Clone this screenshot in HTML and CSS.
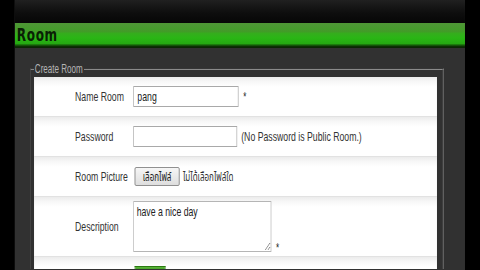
FILE: index.html
```html
<!DOCTYPE html>
<html lang="en">
<head>
    <meta charset="UTF-8">
    <title>Room - Create Room</title>
    <link rel="stylesheet" href="styles.css">
</head>
<body>
    <div class="viewport">
        <div class="screen">
            <div class="page">
                <div class="topbar"></div>

                <!-- Room panel -->
                <div class="panel">
                    <h2 class="panel-title">Room</h2>
                    <div class="panel-body">
                        <fieldset class="create-room">
                            <legend>Create Room</legend>
                            <form class="room-form">
                                <div class="form-row row-name">
                                    <label class="form-label">Name Room</label>
                                    <div class="form-field">
                                        <input type="text" class="text-input input-name" value="pang">
                                        <span class="required">*</span>
                                    </div>
                                </div>
                                <div class="form-row row-password">
                                    <label class="form-label">Password</label>
                                    <div class="form-field">
                                        <input type="password" class="text-input input-password">
                                        <span class="hint">(No Password is Public Room.)</span>
                                    </div>
                                </div>
                                <div class="form-row row-picture">
                                    <label class="form-label">Room Picture</label>
                                    <div class="form-field">
                                        <button type="button" class="file-btn">เลือกไฟล์</button>
                                        <span class="file-name">ไม่ได้เลือกไฟล์ใด</span>
                                    </div>
                                </div>
                                <div class="form-row row-description">
                                    <label class="form-label">Description</label>
                                    <div class="form-field field-bottom">
                                        <textarea class="text-area">have a nice day</textarea>
                                        <span class="required">*</span>
                                    </div>
                                </div>
                                <div class="form-row row-submit">
                                    <div class="form-label"></div>
                                    <div class="form-field field-top">
                                        <button type="submit" class="submit-btn" aria-label="Create"></button>
                                    </div>
                                </div>
                            </form>
                        </fieldset>
                    </div>
                </div>
            </div>
        </div>
    </div>
</body>
</html>
```

FILE: styles.css
```css
/* === Base === */
html, body {
    margin: 0;
    padding: 0;
    background: #000;
    overflow: hidden;
    height: 270px;
}

.viewport {
    width: 480px;
    height: 270px;
    overflow: hidden;
}

/* the capture is squeezed sideways, so the page is too */
.screen {
    width: 715px;
    height: 270px;
    overflow: hidden;
    transform: scaleX(0.67);
    transform-origin: 0 0;
    font-family: "Liberation Sans", Arial, "Noto Sans Thai", "Noto Sans", sans-serif;
    font-size: 13px;
    color: #333;
}

.page {
    margin: 0 21px 0 22px;
    height: 270px;
    overflow: hidden;
    background: #313131;
}

.topbar {
    height: 23px;
    background: linear-gradient(to bottom, #202020, #0e0e0e 55%, #060606);
}

/* === Green panel header === */
.panel-title {
    margin: 0;
    height: 25px;
    line-height: 24px;
    padding-left: 3px;
    font-family: "DejaVu Sans", Verdana, sans-serif;
    font-size: 18px;
    font-weight: bold;
    letter-spacing: 1px;
    color: #0a2005;
    background: linear-gradient(to bottom,
        #4f9636 0%,
        #429c28 34%,
        #35ad1d 42%,
        #2ab615 60%,
        #25a912 82%,
        #17640a 88%,
        #0c2f04 94%,
        #0a2204 100%);
}

.panel-body {
    padding: 14px 32px 0 23px;
}

/* === Fieldset === */
.create-room {
    margin: 0;
    padding: 1px 8px 0 4px;
    border: 2px groove #8a8a8a;
    border-bottom: none;
}

.create-room legend {
    padding: 0 2px 0 1px;
    margin-left: 0;
    font-size: 12px;
    color: #b5b5b5;
    line-height: 14px;
}

/* === Form rows === */
.room-form {
    margin: 0;
    background: #fff;
}

.form-row {
    display: flex;
    align-items: center;
    height: 40px;
    border-top: 1px solid #e2e2e2;
    background: linear-gradient(to bottom, #ececec, #f8f8f8 5px, #fff 10px);
    box-sizing: border-box;
}

.row-name {
    height: 39px;
    border-top: none;
}

.row-description {
    height: 60px;
}

.row-submit {
    height: 13px;
    overflow: hidden;
    align-items: flex-start;
}

.form-label {
    width: 148px;
    padding-left: 61px;
    box-sizing: border-box;
    flex-shrink: 0;
}

.form-field {
    display: flex;
    align-items: center;
}

.field-bottom {
    align-items: flex-end;
}

.text-input {
    height: 21px;
    box-sizing: border-box;
    border: 1px solid #a9a9a9;
    padding: 0 5px;
    font-family: inherit;
    font-size: 13px;
    color: #222;
    background: #fff;
}

.input-name {
    width: 157px;
}

.input-password {
    width: 155px;
}

.required {
    margin-left: 7px;
    font-size: 12px;
    color: #222;
}

.hint {
    margin-left: 6px;
}

.row-picture .form-field {
    padding-left: 2px;
}

.file-btn {
    width: 67px;
    height: 19px;
    padding: 0;
    border: 1px solid #7a7a7a;
    border-radius: 2px;
    background: linear-gradient(to bottom, #f6f6f6, #dedede);
    font-family: inherit;
    font-size: 12px;
    color: #222;
}

.file-name {
    margin-left: 5px;
    font-size: 12px;
}

.text-area {
    width: 206px;
    height: 51px;
    box-sizing: border-box;
    margin: 3px 0 4px;
    border: 1px solid #b5b5b5;
    padding: 2px 4px;
    font-family: inherit;
    font-size: 13px;
    color: #222;
    display: block;
}

.row-description .required {
    margin-bottom: 1px;
}

.field-top {
    padding: 9px 0 0 2px;
}

.submit-btn {
    display: block;
    width: 46px;
    height: 4px;
    padding: 0;
    border: 1px solid #2b7a12;
    border-bottom: none;
    background: linear-gradient(to bottom, #5cb63a, #3a9a1e);
}
```
